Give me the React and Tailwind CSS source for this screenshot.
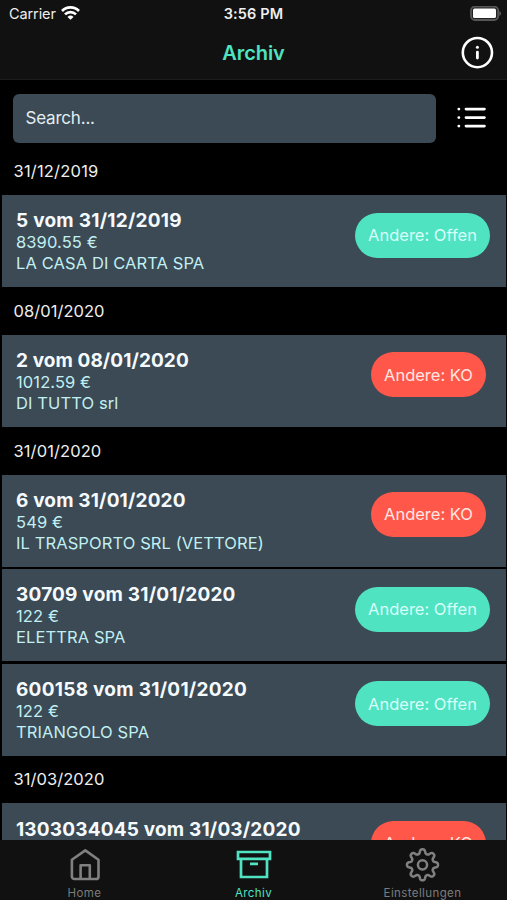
import React from "react";

const groups = [
  { date: "31/12/2019", tracking: "tracking-[0.2px]", items: [{ title: "5 vom 31/12/2019", tracking: "tracking-[0.25px]", amount: "8390.55 €", name: "LA CASA DI CARTA SPA", open: true }] },
  { date: "08/01/2020", tracking: "tracking-[0.05px]", items: [{ title: "2 vom 08/01/2020", tracking: "tracking-[0.08px]", amount: "1012.59 €", name: "DI TUTTO srl", open: false }] },
  {
    date: "31/01/2020",
    tracking: "tracking-[0.1px]",
    items: [
      { title: "6 vom 31/01/2020", tracking: "tracking-[0.16px]", amount: "549 €", name: "IL TRASPORTO SRL (VETTORE)", open: false },
      { title: "30709 vom 31/01/2020", tracking: "tracking-[0.21px]", amount: "122 €", name: "ELETTRA SPA", open: true },
      { title: "600158 vom 31/01/2020", tracking: "tracking-[0.27px]", amount: "122 €", name: "TRIANGOLO SPA", open: true },
    ],
  },
  { date: "31/03/2020", tracking: "tracking-[0.05px]", items: [{ title: "1303034045 vom 31/03/2020", tracking: "tracking-[0.18px]", amount: "", name: "", open: false }] },
];

function Wifi() {
  return (
    <svg width="19" height="15" viewBox="0 0 19 15" fill="none" stroke="#fff" strokeWidth="2.7">
      <path d="M1 5a12 12 0 0 1 17 0M4 8.4a7.8 7.8 0 0 1 11 0" />
      <path d="M9.5 13.8 6.5 10.9a4.3 4.3 0 0 1 6 0z" fill="#fff" stroke="none" />
    </svg>
  );
}

function Battery() {
  return (
    <svg width="32" height="16" viewBox="0 0 32 16">
      <rect x="1" y="0.6" width="27.2" height="13.4" rx="4" fill="#222" stroke="#575757" strokeWidth="1.8" />
      <rect x="3" y="2.6" width="23" height="9.4" rx="1.6" fill="#fff" />
      <path d="M29.4 4.9c2 .8 2 4 0 4.8z" fill="#666" />
    </svg>
  );
}

function Info() {
  return (
    <svg width="34" height="34" viewBox="0 0 34 34" fill="none">
      <circle cx="17.4" cy="16.6" r="14.6" stroke="#fff" strokeWidth="2.6" />
      <circle cx="17.4" cy="11.2" r="1.5" fill="#fff" />
      <path d="M17.4 16.1v6" stroke="#fff" strokeWidth="2.8" strokeLinecap="round" />
    </svg>
  );
}

function ListIcon() {
  return (
    <svg width="30" height="24" viewBox="0 0 30 24" stroke="#fff" strokeLinecap="round" strokeWidth="2.8">
      <path d="M9 3.1h18.4M9 11.6h18.4M9 20.1h18.4M1.8 3.1h.1M1.8 11.6h.1M1.8 20.1h.1" />
    </svg>
  );
}

function Home() {
  return (
    <svg width="36" height="36" viewBox="0 0 36 36" fill="none" stroke="#808080" strokeWidth="2.6" strokeLinejoin="round">
      <path d="M4.9 12.800 18.300 3.400l13.200 9.400v16.600a2.600 2.600 0 0 1-2.600 2.600H7.500a2.600 2.600 0 0 1-2.600-2.600z" />
      <path d="M13.600 32V18.300h9.200V32" />
    </svg>
  );
}

function Archive() {
  return (
    <svg width="36" height="36" viewBox="0 0 36 36" fill="none" stroke="#50e3c2" strokeWidth="2.7">
      <path d="M2 5h32v6.800H2zM5 11.800h26v18.200H5zM14 16.800h8" />
    </svg>
  );
}

// Eight evenly spaced rounded teeth traced in polar coordinates.
const gearPoints = Array.from({ length: 240 }, (_, i) => {
  const a = (i / 240) * Math.PI * 2;
  const r = 13.4 + (2.1 * Math.tanh(1.6 * Math.cos(8 * a))) / Math.tanh(1.6);
  return `${(17.5 + r * Math.cos(a)).toFixed(2)},${(17.8 + r * Math.sin(a)).toFixed(2)}`;
}).join(" ");

function Gear() {
  return (
    <svg width="36" height="36" viewBox="0 0 36 36" fill="none" stroke="#808080" strokeWidth="2.5" strokeLinejoin="round">
      <circle cx="17.5" cy="17.8" r="4.6" />
      <polygon points={gearPoints} />
    </svg>
  );
}

function Tab({ icon, label, active }) {
  return (
    <div className={`flex flex-1 flex-col items-center pt-[7px] text-[11.5px] leading-[14px] tracking-[0.4px] ${active ? "text-[#50e3c2]" : "text-[#7c7c7c]"}`}>
      {icon}
      <span className="mt-[3px] whitespace-nowrap">{label}</span>
    </div>
  );
}

function Card({ item }) {
  return (
    <div className="flex h-[92px] shrink-0 items-start justify-between bg-[#3b4a54] pt-[15.2px] pr-[15.5px] pl-[14px]">
      <div className="whitespace-nowrap text-[16.5px] leading-[21px] tracking-[0.1px] text-[#c2eff2]">
        <div className={`text-[19px] leading-[22px] font-bold text-[#f5faff] ${item.tracking}`}>{item.title}</div>
        <div>{item.amount}</div>
        <div>{item.name}</div>
      </div>
      <div className={`mt-[2.2px] flex h-[45px] items-center justify-center rounded-full pt-[0.5px] text-[16.5px] whitespace-nowrap ${item.open ? "w-[135px] bg-[#50e3c2] text-[#d9fff8]" : "mr-[4px] w-[115px] bg-[#ff584a] text-[#ffe6e2]"}`}>
        {item.open ? "Andere: Offen" : "Andere: KO"}
      </div>
    </div>
  );
}

export default function App() {
  return (
    <div className="flex h-[900px] w-[507px] flex-col overflow-hidden bg-black font-['Inter',sans-serif] text-white">
      <header className="flex h-[80px] shrink-0 flex-col border-b border-[#1c1c1c] bg-[#111111]">
        <div className="grid h-[27px] grid-cols-3 items-center text-[14px] text-[#eeeeee]">
          <div className="flex items-center gap-[5px] pl-[9px] text-[14.5px] tracking-[-0.1px]">Carrier <Wifi /></div>
          <div className="text-center text-[14.5px] font-semibold tracking-[0.15px]">3:56 PM</div>
          <div className="flex justify-end pr-[5px]"><Battery /></div>
        </div>
        <div className="grid h-[51px] grid-cols-3 items-center">
          <div />
          <div className="text-center text-[20px] font-semibold tracking-[-0.1px] text-[#50e3c2]">Archiv</div>
          <div className="flex justify-end pr-[13px]"><Info /></div>
        </div>
      </header>
      <div className="flex h-[67.5px] shrink-0 items-start pt-[14px] pl-[13px]">
        <div className="flex h-[49px] w-[423px] items-center rounded-[6px] bg-[#3b4a54] px-[12.5px] pt-[1px] text-[17px] tracking-[-0.2px] text-[#e3edf2]">Search...</div>
        <div className="mt-[12px] ml-[21px]"><ListIcon /></div>
      </div>
      <main className="flex min-h-0 flex-1 flex-col overflow-hidden pr-[1.5px] pl-[2px]">
        {groups.map((g) => (
          <section key={g.date} className="shrink-0">
            <h2 className={`flex h-[47.7px] items-center pt-[0.5px] pl-[11.5px] text-[16.5px] text-[#eeeeee] ${g.tracking}`}>{g.date}</h2>
            <div className="flex flex-col gap-[2.6px]">
              {g.items.map((item) => <Card key={item.title} item={item} />)}
            </div>
          </section>
        ))}
      </main>
      <nav className="flex h-[60px] shrink-0 bg-[#111111]">
        <Tab icon={<Home />} label="Home" />
        <Tab icon={<Archive />} label="Archiv" active />
        <Tab icon={<Gear />} label="Einstellungen" />
      </nav>
    </div>
  );
}
